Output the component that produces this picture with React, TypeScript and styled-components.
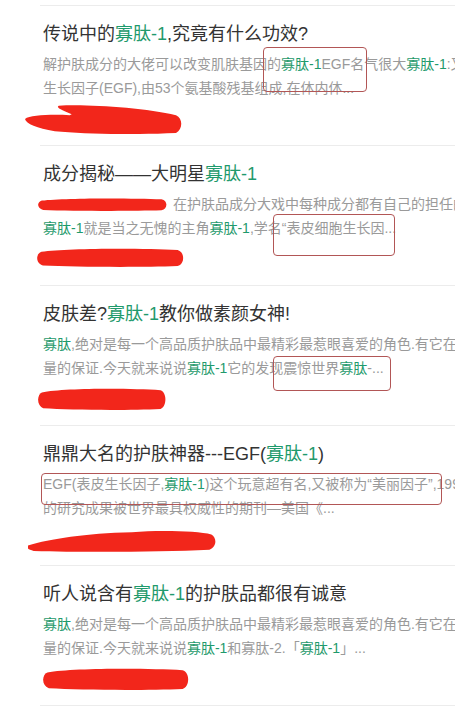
import styled, { createGlobalStyle } from 'styled-components';

const GlobalStyle = createGlobalStyle`
  html, body {
    margin: 0;
    padding: 0;
    background: #fff;
  }
  body {
    font-family: "Liberation Sans", "Noto Sans CJK SC", sans-serif;
    overflow: hidden;
  }
`;

const Page = styled.div`
  width: 455px;
  height: 706px;
  box-sizing: border-box;
  padding: 5px 0 0 40px;
  overflow: hidden;
  background: #fff;
`;

const Item = styled.div`
  position: relative;
  height: 140px;
  box-sizing: border-box;
  border-top: 1px solid #ececec;
  padding: 17px 0 0 3px;
`;

const Title = styled.div`
  font-size: 18px;
  line-height: 22px;
  color: #333;
  white-space: nowrap;
  margin-bottom: 7px;
`;

const Line = styled.div`
  font-size: 14px;
  line-height: 24px;
  color: #9a9a9a;
  white-space: nowrap;
`;

const Hl = styled.span`
  color: #1f9a6c;
`;

const Mark = styled.div<{ $x: number; $y: number; $w: number; $h: number }>`
  position: absolute;
  left: ${(p) => p.$x}px;
  top: ${(p) => p.$y}px;
  width: ${(p) => p.$w}px;
  height: ${(p) => p.$h}px;
  box-sizing: border-box;
  border: 1px solid #b25656;
  border-radius: 4px;
`;

const ScribbleSvg = styled.svg<{ $dx: number; $dy: number }>`
  display: block;
  margin-left: ${(p) => p.$dx}px;
  margin-top: ${(p) => p.$dy}px;
`;

const InlineScribble = styled.svg`
  display: inline-block;
  vertical-align: middle;
  margin: -2px 5px 0 -5px;
`;

const RED = '#f2261b';

const paths: Record<string, string> = {
  hook: 'M0,17 C5,13 25,12 45,13 L47,12 C40,9 30,5 34,3 C60,1 120,5 152,13 C159,16 159,28 152,32 C110,34 60,33 30,30 C12,27 1,22 0,17 Z',
  blob: 'M3,4 C20,0 70,0 95,2 C100,4 100,17 95,19 C70,20.5 25,20 4,18.5 C-1,16 -1,6 3,4 Z',
  taper: 'M0,14 C12,8 30,3 55,2 C70,0 90,1 97,4 C100,7 100,15 96,18 C70,20 30,20.5 3,19 C0,18 -1,16 0,14 Z',
};

const Scribble = ({ kind, w, h, dx, dy }: { kind: string; w: number; h: number; dx: number; dy: number }) => (
  <ScribbleSvg
    $dx={dx}
    $dy={dy}
    width={w}
    height={h}
    viewBox={kind === 'hook' ? '0 0 158 33' : '0 0 100 20'}
    preserveAspectRatio="none"
  >
    <path d={paths[kind]} fill={RED} />
  </ScribbleSvg>
);

// {…} marks the highlighted keyword
const Rich = ({ text }: { text: string }) => (
  <>
    {text.split(/[{}]/).map((part, i) => (i % 2 ? <Hl key={i}>{part}</Hl> : <span key={i}>{part}</span>))}
  </>
);

export default function App() {
  return (
    <Page>
      <GlobalStyle />

      <Item>
        <Title>
          <Rich text="传说中的{寡肽-1},究竟有什么功效?" />
        </Title>
        <Line>
          <Rich text="解护肤成分的大佬可以改变肌肤基因的{寡肽-1}EGF名气很大{寡肽-1}:又称表皮" />
        </Line>
        <Line>生长因子(EGF),由53个氨基酸残基组成,在体内体...</Line>
        <Scribble kind="hook" w={157} h={31} dx={-18} dy={3} />
        <Mark $x={223} $y={41} $w={104} $h={45} />
      </Item>

      <Item>
        <Title>
          <Rich text="成分揭秘——大明星{寡肽-1}" />
        </Title>
        <Line>
          <InlineScribble width={130} height={13} viewBox="0 0 100 20" preserveAspectRatio="none">
            <path d={paths.blob} fill={RED} />
          </InlineScribble>
          在护肤品成分大戏中每种成分都有自己的担任的
        </Line>
        <Line>
          <Rich text="{寡肽-1}就是当之无愧的主角{寡肽-1},学名“表皮细胞生长因..." />
        </Line>
        <Scribble kind="blob" w={148} h={19} dx={-6} dy={8} />
        <Mark $x={233} $y={68} $w={122} $h={42} />
      </Item>

      <Item>
        <Title>
          <Rich text="皮肤差?{寡肽-1}教你做素颜女神!" />
        </Title>
        <Line>
          <Rich text="{寡肽},绝对是每一个高品质护肤品中最精彩最惹眼喜爱的角色.有它在" />
        </Line>
        <Line>
          <Rich text="量的保证.今天就来说说{寡肽-1}它的发现震惊世界{寡肽}-..." />
        </Line>
        <Scribble kind="blob" w={129} h={22} dx={-5} dy={8} />
        <Mark $x={233} $y={70} $w={118} $h={35} />
      </Item>

      <Item>
        <Title>
          <Rich text="鼎鼎大名的护肤神器---EGF({寡肽-1})" />
        </Title>
        <Line>
          <Rich text="EGF(表皮生长因子,{寡肽-1})这个玩意超有名,又被称为“美丽因子”,1992年" />
        </Line>
        <Line>的研究成果被世界最具权威性的期刊—美国《...</Line>
        <Scribble kind="taper" w={189} h={22} dx={-15} dy={10} />
        <Mark $x={1} $y={47} $w={401} $h={32} />
      </Item>

      <Item>
        <Title>
          <Rich text="听人说含有{寡肽-1}的护肤品都很有诚意" />
        </Title>
        <Line>
          <Rich text="{寡肽},绝对是每一个高品质护肤品中最精彩最惹眼喜爱的角色.有它在" />
        </Line>
        <Line>
          <Rich text="量的保证.今天就来说说{寡肽-1}和寡肽-2.「{寡肽-1}」..." />
        </Line>
        <Scribble kind="blob" w={147} h={22} dx={0} dy={8} />
      </Item>

      <Item />
    </Page>
  );
}
